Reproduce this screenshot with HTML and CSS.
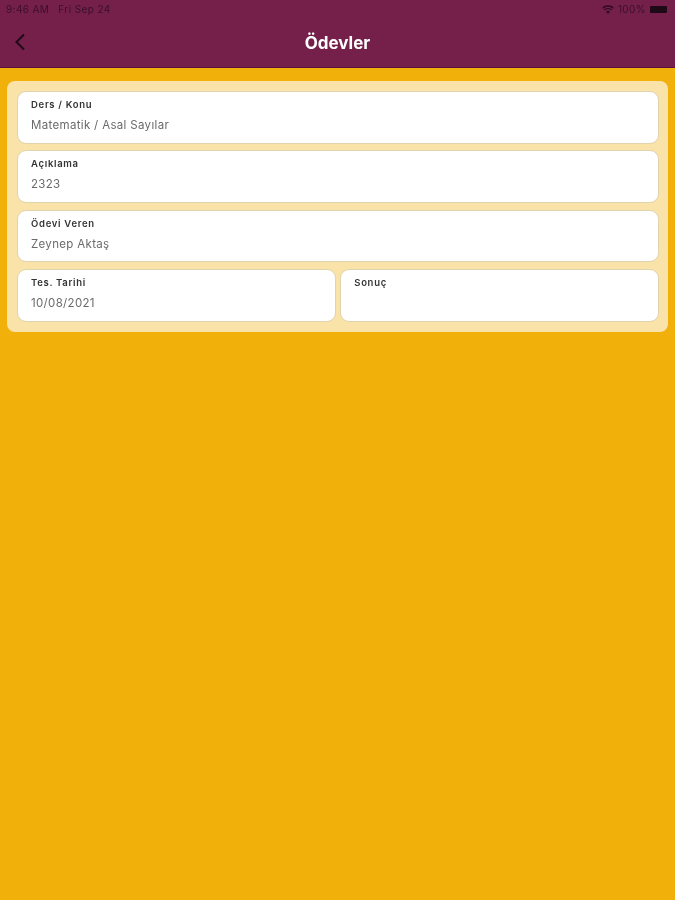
FILE: index.html
```html
<!DOCTYPE html>
<html lang="tr">
<head>
    <meta charset="UTF-8">
    <meta name="viewport" content="width=device-width, initial-scale=1.0">
    <title>Ödevler</title>
    <link rel="stylesheet" href="styles.css">
</head>
<body>
    <header class="topbar">
        <div class="status">
            <div class="status-left">
                <span>9:46 AM</span>
                <span>Fri Sep 24</span>
            </div>
            <div class="status-right">
                <svg class="wifi" width="12" height="9" viewBox="0 0 12 9">
                    <path d="M0.6 3.2a7.8 7.8 0 0 1 10.8 0" fill="none" stroke="#2c0b20" stroke-width="1.4"/>
                    <path d="M2.5 5.1a5 5 0 0 1 7 0" fill="none" stroke="#2c0b20" stroke-width="1.4"/>
                    <path d="M6 8.8 4 6.8a2.9 2.9 0 0 1 4 0z" fill="#2c0b20"/>
                </svg>
                <span>100%</span>
                <span class="battery"></span>
            </div>
        </div>
        <div class="nav">
            <svg class="back" width="12" height="18" viewBox="0 0 12 18">
                <path d="M10 1.5 2.5 9l7.5 7.5" fill="none" stroke="#1d0a16" stroke-width="2"/>
            </svg>
            <h1>Ödevler</h1>
        </div>
    </header>

    <main class="panel">
        <div class="field">
            <label>Ders / Konu</label>
            <div class="value">Matematik / Asal Sayılar</div>
        </div>
        <div class="field">
            <label>Açıklama</label>
            <div class="value">2323</div>
        </div>
        <div class="field">
            <label>Ödevi Veren</label>
            <div class="value">Zeynep Aktaş</div>
        </div>
        <div class="row">
            <div class="field">
                <label>Tes. Tarihi</label>
                <div class="value">10/08/2021</div>
            </div>
            <div class="field">
                <label>Sonuç</label>
                <div class="value"></div>
            </div>
        </div>
    </main>
</body>
</html>
```

FILE: styles.css
```css
body {
    font-family: Inter, "Liberation Sans", sans-serif;
    background-color: #f2b00a;
    color: #333;
    margin: 0;
    padding: 0;
    height: 900px;
    overflow: hidden;
}

/* the reference is a soft, upscaled capture */
.topbar, .panel {
    filter: blur(0.4px);
}

.topbar {
    height: 67px;
    background-color: #74204a;
    border-bottom: 1px solid #5e1040;
}

.status {
    display: flex;
    justify-content: space-between;
    align-items: center;
    height: 18px;
    padding: 0 8px 0 6px;
    font-size: 10px;
    letter-spacing: 0.4px;
    color: #3a1029;
}

.status-left {
    display: flex;
    gap: 9px;
}

.status-right {
    display: flex;
    align-items: center;
    gap: 4px;
}

.battery {
    width: 17px;
    height: 7px;
    background-color: #1d0a16;
    border-radius: 1px;
}

.nav {
    position: relative;
    height: 49px;
    display: flex;
    align-items: center;
    justify-content: center;
}

.back {
    position: absolute;
    left: 14px;
    top: 15px;
}

h1 {
    margin: 1px 0 0 0;
    font-size: 17px;
    font-weight: 700;
    color: #fff;
}

.panel {
    display: flex;
    flex-direction: column;
    gap: 6.5px;
    margin: 13px 7px 0 7px;
    padding: 10px 9px 10px 10px;
    background-color: #fae3a9;
    border-radius: 8px;
}

.row {
    display: flex;
    gap: 4.5px;
}

.row .field {
    flex: 1;
}

.field {
    box-sizing: border-box;
    height: 52.83px;
    padding: 7px 13px 0 13px;
    background-color: #fff;
    border: 1px solid #e0d3ae;
    border-radius: 9px;
}

label {
    display: block;
    font-size: 9.5px;
    font-weight: 600;
    line-height: 12px;
    letter-spacing: 0.7px;
    color: #333;
}

.value {
    margin-top: 6px;
    font-size: 11.5px;
    line-height: 16px;
    letter-spacing: 0.33px;
    color: #6b6b6b;
}
```
